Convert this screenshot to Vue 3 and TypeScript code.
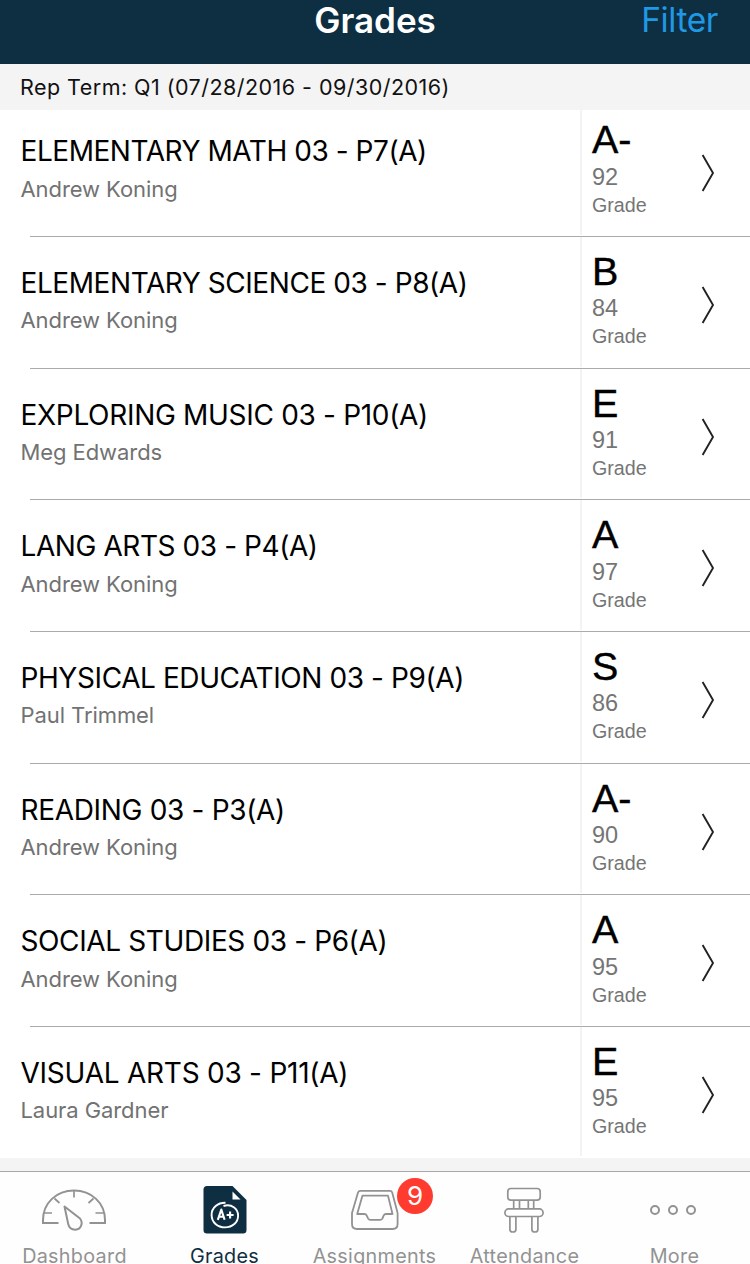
<script setup lang="ts">
interface Course {
  title: string
  teacher: string
  letter: string
  score: number
  tracking: number
}

const courses: Course[] = [
  { title: 'ELEMENTARY MATH 03 - P7(A)', teacher: 'Andrew Koning', letter: 'A-', score: 92, tracking: -0.45 },
  { title: 'ELEMENTARY SCIENCE 03 - P8(A)', teacher: 'Andrew Koning', letter: 'B', score: 84, tracking: -0.43 },
  { title: 'EXPLORING MUSIC 03 - P10(A)', teacher: 'Meg Edwards', letter: 'E', score: 91, tracking: -0.31 },
  { title: 'LANG ARTS 03 - P4(A)', teacher: 'Andrew Koning', letter: 'A', score: 97, tracking: -0.42 },
  { title: 'PHYSICAL EDUCATION 03 - P9(A)', teacher: 'Paul Trimmel', letter: 'S', score: 86, tracking: -0.41 },
  { title: 'READING 03 - P3(A)', teacher: 'Andrew Koning', letter: 'A-', score: 90, tracking: -0.32 },
  { title: 'SOCIAL STUDIES 03 - P6(A)', teacher: 'Andrew Koning', letter: 'A', score: 95, tracking: -0.38 },
  { title: 'VISUAL ARTS 03 - P11(A)', teacher: 'Laura Gardner', letter: 'E', score: 95, tracking: -0.24 },
]
</script>

<template>
  <div class="screen">
    <header class="navbar">
      <span></span>
      <h1>Grades</h1>
      <a class="filter">Filter</a>
    </header>
    <div class="term">Rep Term: Q1 (07/28/2016 - 09/30/2016)</div>

    <main class="list">
      <div v-for="c in courses" :key="c.title" class="row">
        <div class="course">
          <div class="title" :style="{ letterSpacing: c.tracking + 'px' }">{{ c.title }}</div>
          <div class="teacher">{{ c.teacher }}</div>
        </div>
        <div class="grade">
          <div class="letter">{{ c.letter }}</div>
          <div class="score">{{ c.score }}</div>
          <div class="caption">Grade</div>
        </div>
        <svg class="chevron" width="16" height="40" viewBox="0 0 16 40">
          <path d="M2.6 2 L13 20 L2.6 38" fill="none" stroke="#222" stroke-width="1.9" />
        </svg>
      </div>
    </main>

    <nav class="tabs">
      <div class="tab">
        <svg class="icon" width="150" height="70" viewBox="0 0 150 70" fill="none" stroke="#929292" stroke-width="2">
          <path d="M58.5 51 H43 V48 C43 31 56.500 18.500 74 18.500 S105 31 105 48 V51 H89.500" />
          <path d="M74 19 V25.500 M54.500 26.500 L59.500 31 M93.500 26.500 L88.500 31 M44 41 H52 M104 41 H95.500" stroke-width="1.7" />
          <path d="M64.500 34.500 L80 46.500 C83.500 51 81 57.500 75.500 57.700 C71.500 57.800 69 55.500 68.200 52 Z" stroke-linejoin="round" />
        </svg>
        <span class="label">Dashboard</span>
      </div>
      <div class="tab active">
        <svg class="icon" width="150" height="70" viewBox="0 0 150 70" fill="none">
          <path d="M57 14 H82.500 L96.500 28 V58 Q96.500 61.500 93 61.500 H57 Q53.500 61.500 53.500 58 V17.500 Q53.500 14 57 14 Z" fill="#0e2e42" />
          <path d="M82.500 19.500 L90.500 27.500 H82.500 Z" fill="#fff" />
          <path d="M75.500 30.700 C68 30.500 61.500 35.500 61.600 43 C61.700 50.500 67.500 55.400 75 55.400 C82.500 55.400 88.100 50.500 88.100 43.500 C88.100 36.500 81.500 31.500 73.500 34" stroke="#fff" stroke-width="1.9" />
          <path d="M67.800 47.800 L71.300 37.600 L74.600 47.800 M69.200 44.800 H73.600 M76.600 43 H83.600 M80.100 39.500 V46.500" stroke="#fff" stroke-width="2.1" stroke-linejoin="round" />
        </svg>
        <span class="label">Grades</span>
      </div>
      <div class="tab">
        <svg class="icon" width="150" height="70" viewBox="0 0 150 70" fill="none" stroke="#929292" stroke-width="1.8" stroke-linejoin="round">
          <path d="M60.500 18.800 H90 Q91.700 18.800 92.200 20.500 L97.600 41 V52 Q97.600 57 92.600 57 H57 Q52 57 52 52 V41 L58 20.500 Q58.500 18.800 60.500 18.800 Z" />
          <path d="M62.500 23.600 H88 L92.500 42 H86 Q84.300 42 83.500 43.800 L82.500 46.300 Q81.700 47.800 80 47.800 H70.500 Q68.800 47.800 68 46.300 L66.900 43.800 Q66 42 64.300 42 H57.200 Z" />
        </svg>
        <span class="badge">9</span>
        <span class="label">Assignments</span>
      </div>
      <div class="tab">
        <svg class="icon" width="150" height="70" viewBox="0 0 150 70" fill="none" stroke="#929292" stroke-width="1.7">
          <rect x="57.800" y="16.500" width="32.400" height="11.600" rx="3.200" />
          <path d="M63.700 28 V37 M69.500 28 V37 M78.300 28 V37 M83.700 28 V37" />
          <rect x="54.900" y="36.900" width="38.200" height="7.600" rx="3.800" />
          <path d="M59.900 44.500 V57.500 Q59.900 60 62.900 60 T65.900 57.500 V44.500 M81.900 44.500 V57.500 Q81.900 60 84.900 60 T87.900 57.500 V44.500" />
        </svg>
        <span class="label">Attendance</span>
      </div>
      <div class="tab">
        <svg class="icon" width="150" height="70" viewBox="0 0 150 70" fill="none" stroke="#929292" stroke-width="2">
          <circle cx="55" cy="38" r="4" />
          <circle cx="73" cy="38" r="4" />
          <circle cx="91" cy="38" r="4" />
        </svg>
        <span class="label">More</span>
      </div>
    </nav>
  </div>
</template>

<style>
body {
  margin: 0;
}
</style>

<style scoped>
.screen {
  width: 750px;
  height: 1264px;
  overflow: hidden;
  background: #f4f4f4;
  font-family: Inter, Roboto, sans-serif;
  display: flex;
  flex-direction: column;
}
.navbar {
  flex: none;
  height: 64px;
  box-sizing: border-box;
  padding-right: 32px;
  background: #0e2e42;
  display: grid;
  grid-template-columns: 250px 250px 1fr;
  line-height: 41px;
}
.navbar h1 {
  margin: 0;
  text-align: center;
  color: #fff;
  font-size: 35px;
  font-weight: 600;
}
.filter {
  color: #1f99e5;
  font-size: 33.5px;
  letter-spacing: -0.4px;
  text-align: right;
}
.term {
  flex: none;
  position: relative;
  z-index: 1;
  height: 46px;
  line-height: 47px;
  padding-left: 20px;
  background: #f4f4f4;
  font-size: 21.5px;
  letter-spacing: 0.46px;
  color: #111;
}
.list {
  flex: none;
  margin-top: -5px;
  height: 1053px;
  background: #fff;
  display: grid;
  grid-template-rows: 131.9px repeat(6, 131.66px) 1fr;
}
.row {
  display: grid;
  grid-template-columns: 580px 120px 50px;
  background: linear-gradient(#ababab, #ababab) 30px 100% / 720px 1px no-repeat;
}
.row:last-child {
  background: none;
}
.course {
  padding: 29px 0 0 20.5px;
  white-space: nowrap;
}
.title {
  font-size: 28px;
  line-height: 34px;
  color: #000;
}
.teacher {
  margin-top: 6.5px;
  font-size: 22px;
  line-height: 28px;
  letter-spacing: -0.08px;
  color: #727272;
}
.grade {
  margin-bottom: 2px;
  border-left: 2px solid #f3f3f3;
  padding: 14px 0 0 10px;
  font-family: "Liberation Sans", Arial, sans-serif;
}
.letter {
  font-size: 39.5px;
  line-height: 40px;
  color: #000;
  -webkit-text-stroke: 0.4px #000;
}
.score {
  margin-top: 3.5px;
  font-size: 23.5px;
  line-height: 28px;
  color: #757575;
}
.caption {
  font-size: 19.7px;
  line-height: 28px;
  color: #757575;
}
.chevron {
  margin-top: 48px;
}
.tabs {
  flex: none;
  margin-top: 13px;
  height: 93px;
  box-sizing: border-box;
  border-top: 1px solid #a9a9a9;
  background: #fefefe;
  display: grid;
  grid-template-columns: repeat(5, 150px);
}
.tab {
  position: relative;
  text-align: center;
  color: #929292;
}
.tab.active {
  color: #0e2e42;
}
.icon {
  display: block;
  height: 70px;
}
.label {
  display: block;
  font-size: 19.8px;
  line-height: 28px;
  width: 149px;
  white-space: nowrap;
  letter-spacing: 0.3px;
}
.badge {
  position: absolute;
  left: 97px;
  top: 6px;
  width: 36px;
  height: 36px;
  border-radius: 50%;
  background: #ff3b30;
  color: #fff;
  font-size: 26px;
  line-height: 36px;
}
</style>
